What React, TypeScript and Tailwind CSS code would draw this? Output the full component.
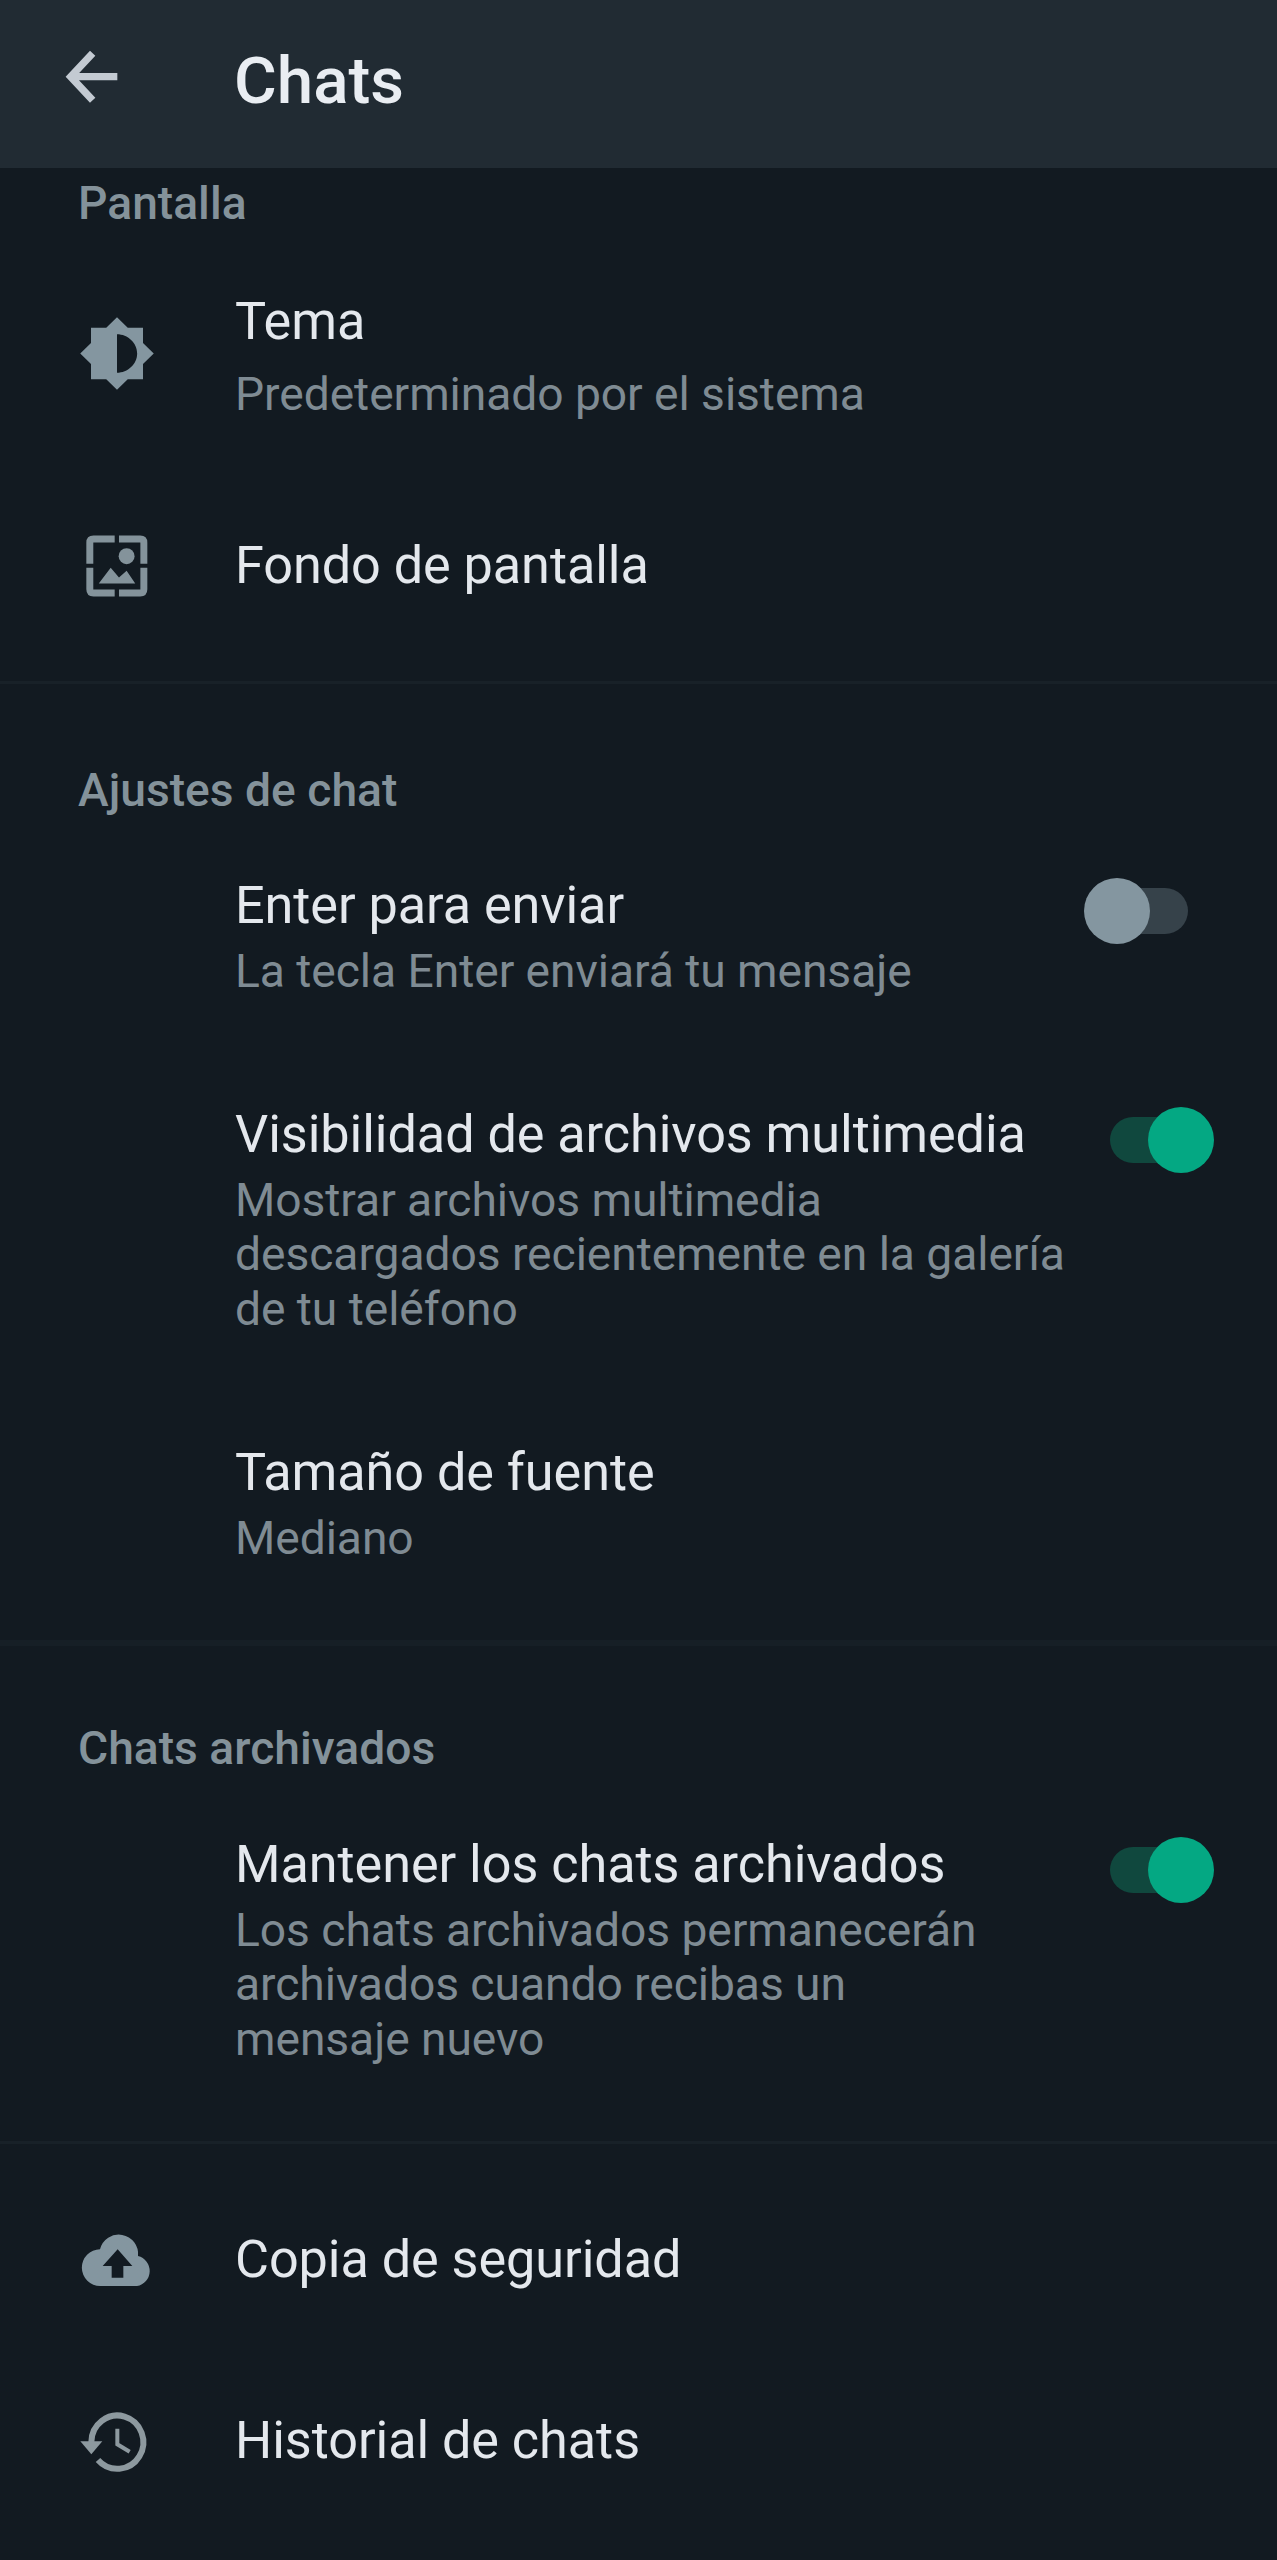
import React from "react";

type RowProps = {
  title: string;
  lines?: string[];
  icon?: React.ReactNode;
  control?: React.ReactNode;
  className?: string;
  subClass?: string;
};

function Row({ title, lines, icon, control, className = "", subClass = "mt-2" }: RowProps) {
  return (
    <div className={`flex items-start ${className}`}>
      <div className="ml-[70px] flex h-[60px] w-[100px] shrink-0 justify-center">{icon}</div>
      <div className="ml-[65px] min-w-0 flex-1 whitespace-nowrap">
        <div className="text-[52.2px] leading-[60px] tracking-[-0.06px] text-[#e4e8ed]">{title}</div>
        {lines && (
          <div className={`text-[46.2px] leading-[54.4px] tracking-[-0.06px] text-[#7f8b93] ${subClass}`}>
            {lines.map((l) => (
              <div key={l}>{l}</div>
            ))}
          </div>
        )}
      </div>
      {control}
    </div>
  );
}

function SectionLabel({ children, className = "" }: { children: string; className?: string }) {
  return (
    <h2 className={`pl-[78px] text-[46.2px] font-medium leading-[54px] text-[#84929a] ${className}`}>{children}</h2>
  );
}

function Toggle({ on, className = "" }: { on: boolean; className?: string }) {
  return (
    <div
      role="switch"
      aria-checked={on}
      className={`relative flex h-[66px] w-[104px] shrink-0 items-center ${on ? "justify-end" : "justify-start"} ${className}`}
    >
      <div
        className={`absolute top-[10px] h-[46px] w-[90px] rounded-full ${on ? "left-0 bg-[#10483e]" : "right-0 bg-[#36424a]"}`}
      />
      <div className={`relative size-[66px] rounded-full ${on ? "bg-[#04a883]" : "bg-[#8496a0]"}`} />
    </div>
  );
}

function BackArrow() {
  return (
    <svg viewBox="0 0 300 300" className="size-[100px]" fill="none" stroke="#c3cad2" strokeWidth="22">
      <path d="M202 140H66M128 70L62 140L128 211" />
    </svg>
  );
}

function ThemeIcon() {
  return (
    <svg viewBox="0 0 24 24" preserveAspectRatio="none" className="-ml-[6px] mt-[23px] h-[77px] w-[78px] shrink-0" fill="#8496a0">
      <path d="M20 15.31L23.31 12 20 8.69V4h-4.69L12 .69 8.69 4H4v4.69L.69 12 4 15.31V20h4.69L12 23.31 15.31 20H20v-4.69zM12 18V6c3.31 0 6.2 2.69 6.2 6s-2.89 6-6.2 6z" />
    </svg>
  );
}

function WallpaperIcon() {
  return (
    <svg viewBox="0 0 186 187" className="-ml-[6px] -mt-px size-[62px] shrink-0" fill="#84939b">
      <g fill="none" stroke="#84939b" strokeWidth="21">
        <path d="M86 12H22Q11 12 11 23V87" />
        <path d="M99 12H163Q174 12 174 23V87" />
        <path d="M11 99V164Q11 175 22 175H86" />
        <path d="M174 99V164Q174 175 163 175H99" />
      </g>
      <circle cx="122" cy="64" r="24" />
      <path d="M38 146L74 99L99 128L122 108L148 146Z" />
    </svg>
  );
}

function CloudIcon() {
  return (
    <svg viewBox="0 0 300 210" className="-mt-[5px] h-[70px] w-[100px] shrink-0" fill="#8496a0">
      <path
        fillRule="evenodd"
        d="M90 73A58 58 0 0 1 204 93A46 46 0 0 1 201 183H91A54.5 54.5 0 0 1 90 73ZM143 73L98 123H125V158H160V123H187Z"
      />
    </svg>
  );
}

function HistoryIcon() {
  return (
    <svg viewBox="0 0 300 240" className="-mt-[11px] h-20 w-[100px] shrink-0" fill="none" stroke="#8d999f">
      <path d="M64 126A78 80 0 1 1 84 180" strokeWidth="18" />
      <path d="M31 124H97L64 163Z" fill="#8d999f" stroke="none" />
      <path d="M142 86V133L179 155" strokeWidth="12" />
    </svg>
  );
}

export default function App() {
  return (
    <div className="h-[2560px] w-[1277px] overflow-hidden bg-[#121a21] font-['Roboto',sans-serif]">
      <header className="flex h-[168px] items-start bg-[#212b33]">
        <div className="ml-[50px] mt-[30px] w-[100px]">
          <BackArrow />
        </div>
        <h1 className="ml-[84px] mt-[43px] text-[65.5px] font-medium leading-[76px] text-[#e9edf2]">Chats</h1>
      </header>

      <section className="border-b-[3px] border-[#182128] pb-[85px]">
        <SectionLabel className="pt-2">Pantalla</SectionLabel>
        <Row
          className="h-[192px] pt-[62px]"
          title="Tema"
          lines={["Predeterminado por el sistema"]}
          subClass="mt-[15px]"
          icon={<ThemeIcon />}
        />
        <Row className="pt-[114px]" title="Fondo de pantalla" icon={<WallpaperIcon />} />
      </section>

      <section className="h-[962px] border-b-[6px] border-[#161f26]">
        <SectionLabel className="pt-[79px]">Ajustes de chat</SectionLabel>
        <Row
          className="h-[181px] pt-[59px]"
          title="Enter para enviar"
          lines={["La tecla Enter enviará tu mensaje"]}
          control={<Toggle on={false} className="mr-[89px] mt-[2px]" />}
        />
        <Row
          className="h-[338px] pt-[107px]"
          title="Visibilidad de archivos multimedia"
          lines={["Mostrar archivos multimedia", "descargados recientemente en la galería", "de tu teléfono"]}
          control={<Toggle on className="mr-[63px] mt-[2px]" />}
        />
        <Row className="pt-[107px]" title="Tamaño de fuente" lines={["Mediano"]} />
      </section>

      <section className="h-[498px] border-b-[3px] border-[#182128]">
        <SectionLabel className="pt-[75px]">Chats archivados</SectionLabel>
        <Row
          className="pt-[60px]"
          title="Mantener los chats archivados"
          lines={["Los chats archivados permanecerán", "archivados cuando recibas un", "mensaje nuevo"]}
          control={<Toggle on className="mr-[63px] mt-[2px]" />}
        />
      </section>

      <section>
        <Row className="pt-[86px]" title="Copia de seguridad" icon={<CloudIcon />} />
        <Row className="pt-[121px]" title="Historial de chats" icon={<HistoryIcon />} />
      </section>
    </div>
  );
}
